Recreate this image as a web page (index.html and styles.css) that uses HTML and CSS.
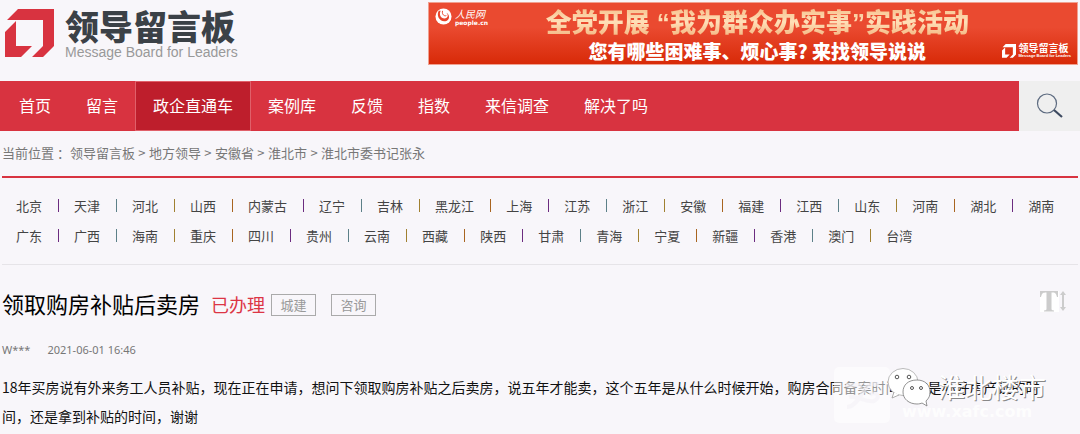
FILE: index.html
```html
<!DOCTYPE html>
<html lang="zh-CN">
<head>
<meta charset="utf-8">
<title>领导留言板</title>
<link rel="stylesheet" href="styles.css">
</head>
<body>
<header class="top">
  <a class="logo" href="#">
    <svg class="logo-mark" viewBox="0 0 49 49" aria-hidden="true"><path fill="#d83340" d="M13 0H49V37L38 48H27L38 37V11H2ZM0 23L11 12V37H27L16 48H0Z"/></svg>
    <span class="logo-words"><span class="logo-name">领导留言板</span><span class="logo-en">Message Board for Leaders</span></span>
  </a>
  <a class="banner" href="#">
    <span class="people">
      <svg class="people-mark" viewBox="0 0 18 18" aria-hidden="true"><circle cx="9" cy="9" r="8.500" fill="#fff"/><path fill="#e8452c" d="M4 3C1 8 5 15 11 14C16 13 16 7 12 5C15 8 13 11 10 11C6 11 4 7 6 3Z"/><path d="M8 3C7 7 10 9 12 8" stroke="#e8452c" fill="none"/></svg>
      <span class="people-words"><span class="people-name">人民网</span><span class="people-en">people.cn</span></span>
    </span>
    <span class="slogan">
      <span class="slogan-main">全党开展<span class="quote"> “</span>我为群众办实事<span class="quote">”</span>实践活动</span>
      <span class="slogan-sub">您有哪些困难事、烦心事? 来找领导说说</span>
    </span>
    <span class="mini">
      <svg class="mini-mark" viewBox="0 0 49 49" aria-hidden="true"><path fill="#fff" d="M13 0H49V37L38 48H27L38 37V11H2ZM0 23L11 12V37H27L16 48H0Z"/></svg>
      <span class="mini-words"><span class="mini-name">领导留言板</span><span class="mini-en">Message Board for Leaders</span></span>
    </span>
  </a>
</header>
<nav class="nav">
  <div class="nav-links">
    <a href="#">首页</a><a href="#">留言</a><a class="active" href="#">政企直通车</a><a href="#">案例库</a><a href="#">反馈</a><a href="#">指数</a><a href="#">来信调查</a><a href="#">解决了吗</a>
  </div>
  <button class="search" type="button" aria-label="搜索">
    <svg viewBox="0 0 28 26" aria-hidden="true"><circle cx="11" cy="10.500" r="9.500" fill="none" stroke="#5d6b80" stroke-width="1.200"/><path d="M18 17L26 24" stroke="#3d4a60" stroke-width="2.200"/></svg>
  </button>
</nav>
<main class="page">
  <div class="crumbs"><span class="here">当前位置 ：</span><a href="#">领导留言板</a><i>&gt;</i><a href="#">地方领导</a><i>&gt;</i><a href="#">安徽省</a><i>&gt;</i><a href="#">淮北市</a><i>&gt;</i><a href="#">淮北市委书记张永</a></div>
  <section class="regions">
    <ul><li><a href="#">北京</a></li><li><a href="#">天津</a></li><li><a href="#">河北</a></li><li><a href="#">山西</a></li><li><a href="#">内蒙古</a></li><li><a href="#">辽宁</a></li><li><a href="#">吉林</a></li><li><a href="#">黑龙江</a></li><li><a href="#">上海</a></li><li><a href="#">江苏</a></li><li><a href="#">浙江</a></li><li><a href="#">安徽</a></li><li><a href="#">福建</a></li><li><a href="#">江西</a></li><li><a href="#">山东</a></li><li><a href="#">河南</a></li><li><a href="#">湖北</a></li><li><a href="#">湖南</a></li></ul>
    <ul><li><a href="#">广东</a></li><li><a href="#">广西</a></li><li><a href="#">海南</a></li><li><a href="#">重庆</a></li><li><a href="#">四川</a></li><li><a href="#">贵州</a></li><li><a href="#">云南</a></li><li><a href="#">西藏</a></li><li><a href="#">陕西</a></li><li><a href="#">甘肃</a></li><li><a href="#">青海</a></li><li><a href="#">宁夏</a></li><li><a href="#">新疆</a></li><li><a href="#">香港</a></li><li><a href="#">澳门</a></li><li><a href="#">台湾</a></li></ul>
  </section>
  <article class="post">
    <div class="post-head">
      <h1>领取购房补贴后卖房</h1>
      <span class="status">已办理</span>
      <span class="tag">城建</span>
      <span class="tag">咨询</span>
      <button class="text-size" type="button" aria-label="字号">
        <svg viewBox="0 0 26 21" aria-hidden="true"><path fill="#fff" d="M0 0H19V21H0Z"/><path fill="#ccc" d="M0 0H18V6H17C16 2 15 1.500 11.500 1.500V18C11.500 19 12 19 14 19.500V20.500H4V19.500C6 19 6.500 19 6.500 18V1.500C3 1.500 2 2 1 6H0ZM23 0L26 4H24V16H26L23 20L20 16H22V4H20Z"/></svg>
      </button>
    </div>
    <div class="meta"><span>W***</span><time>2021-06-01 16:46</time></div>
    <div class="content">
      <p>18年买房说有外来务工人员补贴，现在正在申请，想问下领取购房补贴之后卖房，说五年才能卖，这个五年是从什么时候开始，购房合同备案时间，这是办好房产证的时间，还是拿到补贴的时间，谢谢</p>
      <div class="watermark" aria-hidden="true">
        <div class="wm-box"><svg viewBox="0 0 56 56"><path d="M12 18H28M13 40C20 40 25 32 29 25S38 15 45 18M15 30C23 28 31 36 40 34C48 30 42 23 36 28" fill="none" stroke="#f4f2f6" stroke-opacity=".6" stroke-width="4"/></svg></div>
        <svg class="wm-chat" viewBox="0 0 46 40"><ellipse cx="17" cy="15" rx="15" ry="13.500" fill="#fff" stroke="#aaa" stroke-width=".8"/><path d="M8 25L6 31L13 28" fill="#fff" stroke="#999" stroke-width=".8"/><g fill="#fff" stroke="#555"><circle cx="11" cy="10" r="1.800"/><circle cx="23" cy="10" r="1.800"/></g><path d="M31 13C22 13 17 18 17 25C17 32 23 37 31 37C33 37 35 36.500 36 36L41 39L40 34C43 31 44 29 44 25C44 18 39 13 31 13Z" fill="#fff" stroke="#777" stroke-width=".8"/><g fill="#fff" stroke="#555"><circle cx="26" cy="21" r="1.500"/><circle cx="35" cy="21" r="1.500"/></g></svg>
        <div class="wm-words"><span class="wm-name">淮北楼市</span><span class="wm-url">www.xafc.com</span></div>
      </div>
    </div>
  </article>
</main>
</body>
</html>
```
FILE: styles.css
```css
* { box-sizing: border-box; }
body {
  margin: 0;
  background: #f8f6fa;
  color: #111;
  font-family: "Noto Sans CJK SC", sans-serif;
  font-size: 13px;
}
a { color: inherit; text-decoration: none; }
button { border: 0; padding: 0; background: none; cursor: pointer; }
svg { display: block; }

.top { display: flex; justify-content: space-between; align-items: flex-start; height: 81px; padding: 2px 2px 0 5px; }
.logo { display: flex; gap: 11px; padding-top: 7px; }
.logo-mark { width: 49px; height: 49px; }
.logo-words { display: flex; flex-direction: column; gap: 1px; }
.logo-name { color: #3b4147; font-size: 34px; font-weight: 900; line-height: 34px; }
.logo-en { color: #999; font: 14px/16px "Liberation Sans", sans-serif; }

.banner {
  display: flex; justify-content: space-between;
  width: 650px; height: 63px; padding: 3px 6px 0 6px;
  border: 1px solid #f0a090;
  background: linear-gradient(#ea4a30 40%, #d82a08);
  color: #fff;
}
.people { display: flex; gap: 3px; width: 78px; padding-top: 2px; }
.people-mark { width: 17px; height: 17px; }
.people-words { display: flex; flex-direction: column; }
.people-name { font-size: 10px; line-height: 11px; font-style: italic; }
.people-en { font: bold 6px/7px "DejaVu Sans", sans-serif; }
.slogan { display: flex; flex-direction: column; align-items: center; gap: 2px; white-space: nowrap; }
.slogan-main {
  font-size: 26px; font-weight: 900; line-height: 29px;
  background: linear-gradient(#f5bd88, #ffe0b8 50%, #f2b27c);
  -webkit-background-clip: text; background-clip: text; color: transparent;
}
.quote { font-family: "Liberation Sans", sans-serif; }
.slogan-sub { font-size: 19px; font-weight: 900; line-height: 22px; }
.mini { display: flex; gap: 3px; padding-top: 37px; }
.mini-mark { width: 14px; height: 14px; margin-top: 1px; }
.mini-words { display: flex; flex-direction: column; }
.mini-name { font-size: 10px; font-weight: 700; line-height: 10px; }
.mini-en { font: bold 4px/5px "Liberation Sans", sans-serif; }

.nav { display: flex; height: 50px; background: #efefef; }
.nav-links { display: flex; flex: 1; gap: 1px; padding-left: 1px; background: #d83340; color: #fff; font-size: 16px; line-height: 49px; }
.nav-links a { padding: 0 16px 0 18px; }
.nav-links .active { padding-right: 18px; margin-right: -2px; background: #be1e2c; box-shadow: inset 0 0 0 1px #e0606a; }
.search { display: flex; justify-content: center; align-items: center; width: 61px; }
.search svg { width: 28px; height: 26px; }

.page { padding: 0 2px; }
.crumbs { display: flex; height: 47px; line-height: 43px; border-bottom: 2px solid #d83340; color: #777; font-size: 13px; }
.crumbs .here { white-space: nowrap; }
.crumbs i { width: 14px; text-align: center; font-style: normal; }

.regions { padding: 12px 15px 14px 14px; border-bottom: 1px solid #e6e4e8; color: #444; }
.regions ul { display: flex; align-items: center; height: 30px; margin: 0; padding: 0; list-style: none; white-space: nowrap; }
.regions li { line-height: 13px; }
.regions li + li { margin-left: 16px; padding-left: 15px; border-left: 1px solid #a86420; }
.regions li:nth-child(4n+2) { border-color: #6c2c80; }
.regions li:nth-child(4n+3) { border-color: #5c8088; }
.regions li:nth-child(4n) { border-color: #a08030; }

.post-head { display: flex; align-items: center; height: 82px; padding-bottom: 2px; }
.post-head h1 { margin: 0; padding-bottom: 4px; font-size: 22px; font-weight: 400; color: #000; }
.status { margin-left: 11px; padding-bottom: 2px; color: #dc3545; font-size: 18px; }
.tag { margin-left: 6px; width: 45px; border: 1px solid #aaa; color: #999; line-height: 20px; text-align: center; }
.tag + .tag { margin-left: 15px; }
.text-size { margin: 0 12px 8px auto; }
.text-size svg { width: 26px; height: 21px; }
.meta { display: flex; gap: 17px; color: #777; font: 11px/16px "Noto Sans", sans-serif; margin-top: -5px; }
.content { position: relative; padding-top: 15px; }
.content p { margin: 0; padding-right: 30px; font-size: 14px; line-height: 29px; }

.watermark { position: absolute; right: 14px; bottom: 8px; display: flex; align-items: flex-start; }
.wm-box { width: 56px; height: 56px; border-radius: 5px; background: rgba(255, 255, 255, .55); }
.wm-chat { width: 46px; height: 40px; margin-left: -4px; }
.wm-words { display: flex; flex-direction: column; width: 132px; padding-top: 4px; }
.wm-name { padding-left: 6px; color: #fff; font-size: 27px; line-height: 32px; text-shadow: 1px 1px 0 #888; }
.wm-url { margin-left: -30px; color: rgba(255, 255, 255, .8); font: bold 16px/18px "DejaVu Sans", sans-serif; }
```
